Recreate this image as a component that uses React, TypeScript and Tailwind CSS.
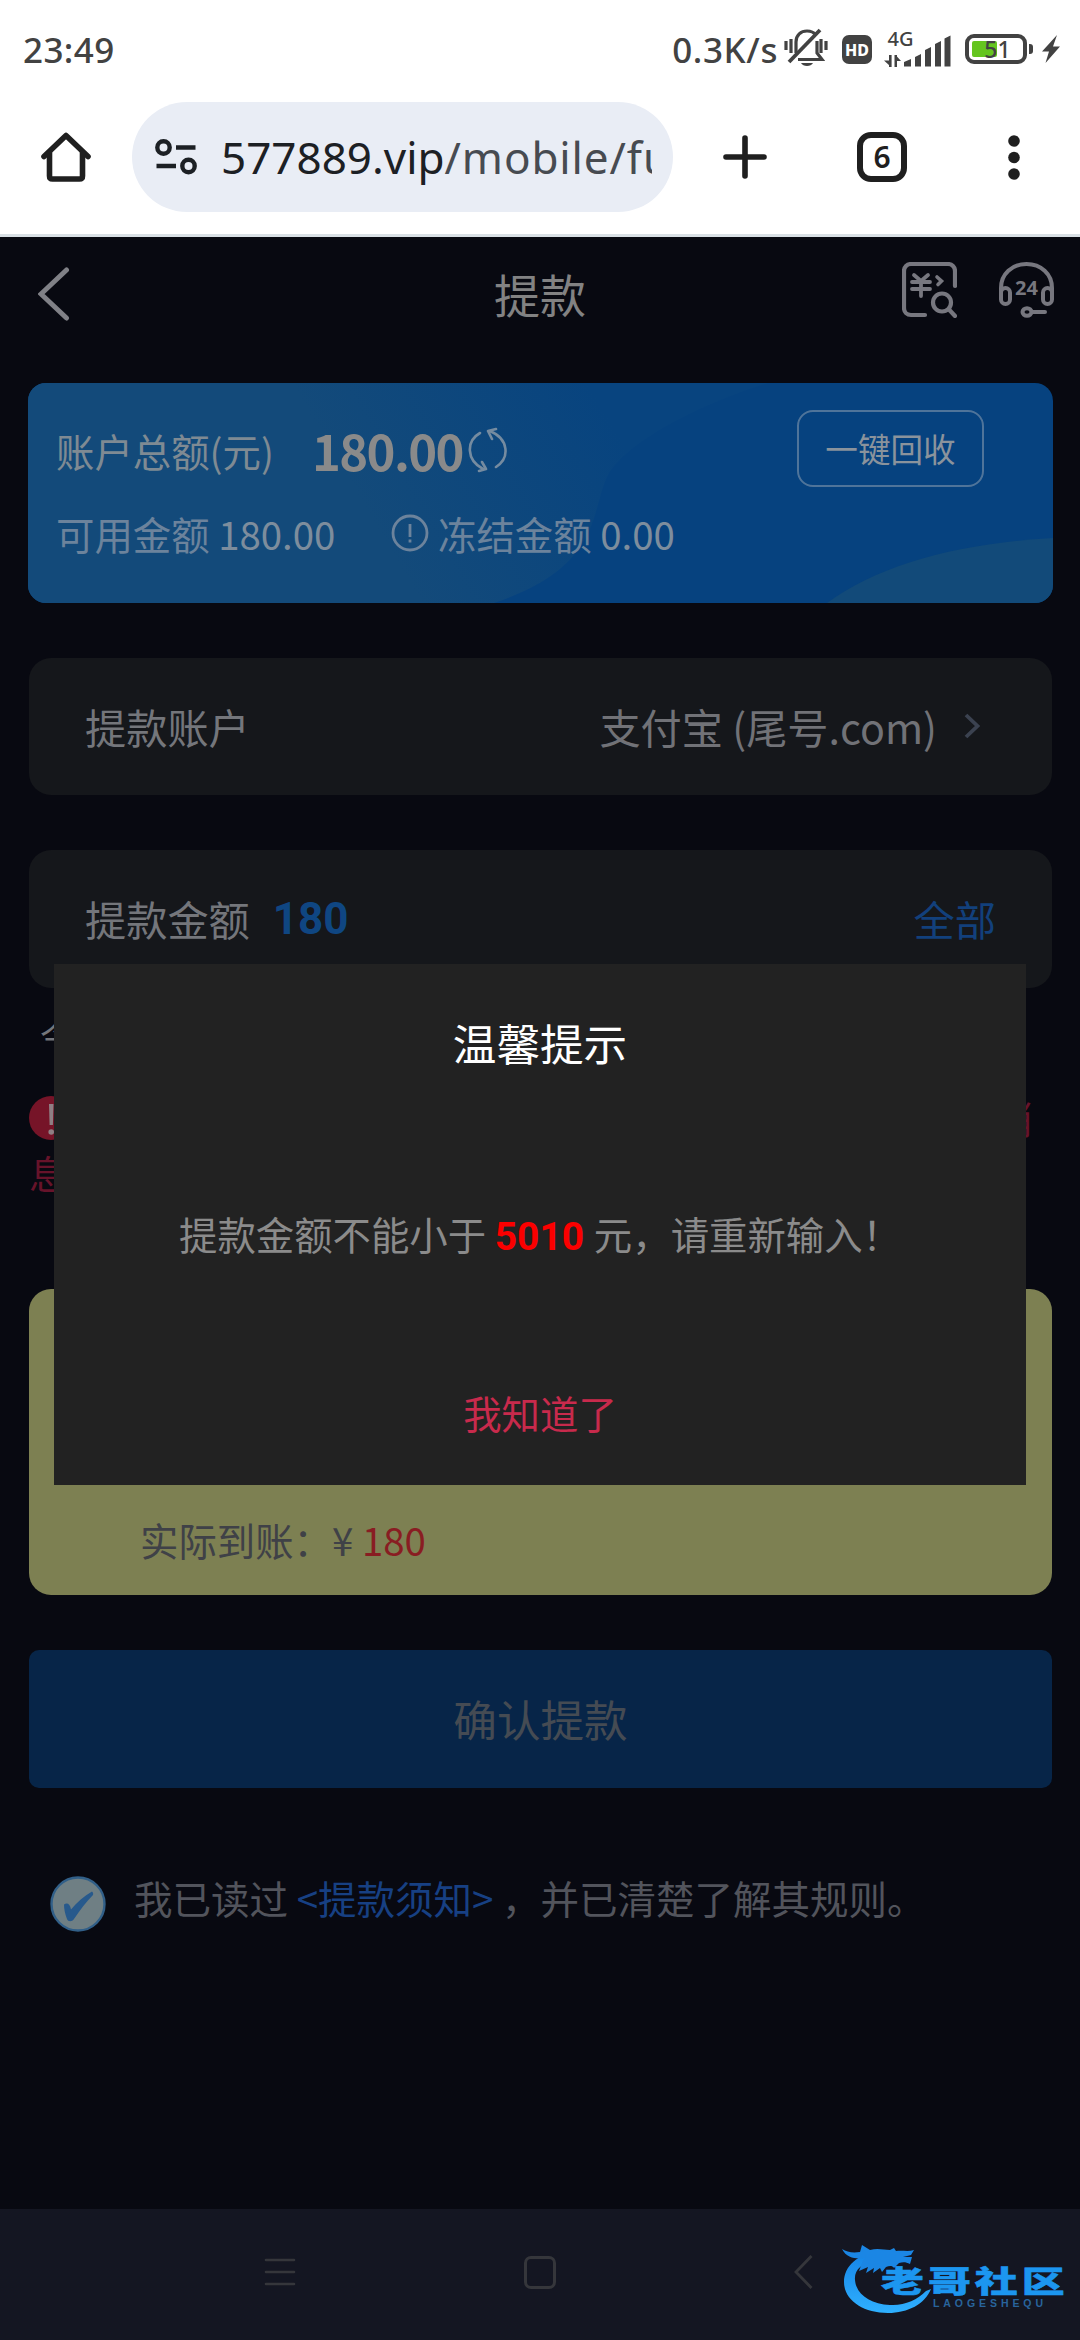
import { useState } from "react";

const MIN_AMOUNT = 5010;

function StatusBar() {
  return (
    <div className="h-[96px] pl-[23px] pr-[20px] flex items-center justify-between text-[#424242] font-medium font-['Noto_Sans','Noto_Sans_CJK_SC',sans-serif]">
      <span className="text-[35px] leading-[48px] tracking-[0.4px] pt-[3px]">23:49</span>
      <div className="flex items-center">
        <span className="text-[35px] leading-[48px] tracking-[0.6px] pt-[3px]">0.3K/s</span>
        <svg className="ml-[6px] mr-[1px] w-[44px] h-[40px]" viewBox="0 0 44 40" fill="none" stroke="currentColor" strokeWidth="3.2">
          <path d="M2 13v9M7 11v14M37 11v14M42 13v9" />
          <path d="M12 25V14c0-7 5-11 11-11 4 0 7 1.500 9 4M33 13v12l5 6.500H14" />
          <path d="M5 34L36 2" strokeWidth="3.8" />
          <path d="M17 35h12c-2 4-10 4-12 0z" fill="currentColor" stroke="none" />
        </svg>
        <div className="ml-[13px] mt-[3px] w-[30px] h-[29px] rounded-[7px] bg-[#424242] text-white text-[16px] font-extrabold leading-none flex items-center justify-center">
          HD
        </div>
        <svg className="ml-[12px] mt-[1px] w-[68px] h-[36px] overflow-visible" viewBox="0 0 68 36" fill="currentColor">
          <text x="3.500" y="14.500" fontSize="20" fontWeight="500">4G</text>
          <path d="M5 24h2.600v12H5zM5.500 34.500L0 29.500h5.500zM10.500 24H13v12h-2.500zM12.500 25L17 30h-4.500z" />
          <path d="M20 31l7-3v7.500h-7zM31 26l6-3v12.500h-6zM41 19l6-3v19.500h-6zM51 13l6-3v25.500h-6zM60.500 7.500l6-3v31h-6z" />
        </svg>
        <div className="ml-[13px] mt-[2px] w-[62px] h-[30px] rounded-[9px] border-4 border-[#424242] p-[3px] flex relative">
          <div className="w-[25px] h-full rounded-[2px] bg-[#65c51f]" />
          <span className="absolute inset-0 pl-[3px] flex items-center justify-center text-[23px] leading-none">51</span>
        </div>
        <div className="ml-[2px] mt-[2px] w-[4px] h-[10px] rounded-r-[3px] bg-[#424242]" />
        <svg className="ml-[9px] mt-[2px] w-[18px] h-[28px]" viewBox="0 0 18 28" fill="currentColor">
          <path d="M15 0L0 16.500h7L3.500 28 18 11.500h-7z" />
        </svg>
      </div>
    </div>
  );
}

function BrowserBar() {
  return (
    <div className="h-[141px] pt-[6px] pl-[41px] flex items-start border-b-[3px] border-[#d9e0e5] text-[#1f1f1f] font-['Noto_Sans','Noto_Sans_CJK_SC',sans-serif]">
      <svg className="mt-[30px] w-[50px] h-[50px]" viewBox="0 0 50 50" fill="none" stroke="currentColor" strokeWidth="5.600" strokeLinejoin="round" strokeLinecap="round">
        <path d="M3 24.500L25 3.500l22 21" />
        <path d="M8.500 21v23c0 2 1 3 3 3h27c2 0 3-1 3-3V21" />
      </svg>
      <div className="ml-[41px] w-[541px] h-[110px] rounded-full bg-[#e9edf5] pl-[23px] flex items-center">
        <svg className="w-[42px] h-[36px]" viewBox="0 0 42 36" fill="none" stroke="#1c2024" strokeWidth="4.400">
          <circle cx="8.500" cy="8.500" r="6.200" />
          <circle cx="33.500" cy="27" r="6.200" />
          <path d="M21 8.500h19.500M1.500 27H21" />
        </svg>
        <div className="ml-[24px] w-[431px] overflow-hidden whitespace-nowrap text-[44px] leading-[60px] text-[#1c2024]">
          577889.vip<span className="text-[#474b51] tracking-[0.900px]">/mobile/fu</span>
        </div>
      </div>
      <svg className="ml-[50px] mt-[33px] w-[44px] h-[44px]" viewBox="0 0 44 44" stroke="currentColor" strokeWidth="5.600" strokeLinecap="round">
        <path d="M22 3v38M3 22h38" />
      </svg>
      <div className="ml-[90px] mt-[30px] w-[50px] h-[50px] rounded-[14px] border-[6px] border-[#1f1f1f] flex items-center justify-center text-[30px] font-semibold leading-none">
        6
      </div>
      <svg className="ml-[101px] mt-[33px] w-[12px] h-[45px]" viewBox="0 0 12 45" fill="currentColor">
        <circle cx="6" cy="6" r="5.800" />
        <circle cx="6" cy="22.500" r="5.800" />
        <circle cx="6" cy="39" r="5.800" />
      </svg>
    </div>
  );
}

function PageHeader() {
  return (
    <header className="h-[146px] pt-[25px] pl-[38px] pr-[26px] grid grid-cols-3 items-start text-[#77777f]">
      <svg className="mt-[5px] w-[32px] h-[54px]" viewBox="0 0 32 54" fill="none" stroke="#808187" strokeWidth="5" strokeLinecap="round">
        <path d="M28.500 3L3 27l25.500 24" />
      </svg>
      <h1 className="-mt-[2px] pl-[4px] pr-[16px] text-center text-[46px] leading-[66px] text-[#828283]">提款</h1>
      <div className="flex justify-end gap-[42px]">
        <svg className="w-[55px] h-[56px]" viewBox="0 0 55 56" fill="none" stroke="currentColor" strokeWidth="4.200" strokeLinecap="round">
          <path d="M53 24V9c0-4-3-7-7-7H9C5 2 2 5 2 9v37c0 4 3 7 7 7h14" />
          <path d="M12 13l7 6 7-6M10 20h18M10 27h18M19 19v15" strokeWidth="3.800" />
          <path d="M35 15l4.500 4L36 22.500" strokeWidth="3.600" />
          <circle cx="40" cy="40.500" r="9" />
          <path d="M47 47.500l6 6.500" />
        </svg>
        <svg className="w-[55px] h-[56px]" viewBox="0 0 55 56" fill="none" stroke="currentColor" strokeWidth="4" strokeLinecap="round">
          <path d="M2 32V26C2 12 13 2 27.500 2S53 12 53 26v6" />
          <rect x="2" y="26" width="9" height="16" rx="4.500" />
          <rect x="44" y="26" width="9" height="16" rx="4.500" />
          <ellipse cx="28" cy="50" rx="4.500" ry="3.800" />
          <path d="M33 50h13" />
          <text x="16" y="33" fontSize="20" fontWeight="700" fill="currentColor" stroke="none" textLength="23" fontFamily="Noto Sans">24</text>
        </svg>
      </div>
    </header>
  );
}

function BalanceCard({ total, frozen }: { total: string; frozen: string }) {
  return (
    <section className="relative ml-[28px] w-[1025px] h-[220px] rounded-[18px] overflow-hidden bg-[#06427f] text-[#7f8a93]">
      <svg className="absolute inset-0 w-full h-full" viewBox="0 0 1025 220">
        <defs>
          <linearGradient id="wave" gradientUnits="userSpaceOnUse" x1="340" y1="130" x2="560" y2="0">
            <stop offset="0" stopColor="#134a7a" />
            <stop offset="1" stopColor="#08447f" />
          </linearGradient>
        </defs>
        <path d="M0 0H740C670 22 600 58 580 92C562 128 575 184 466 220H0z" fill="url(#wave)" />
        <path d="M799 220C850 182 930 160 1025 155V220z" fill="#124a79" />
      </svg>
      <div className="relative pl-[28px] pt-[27px]">
        <div className="flex items-start h-[77px]">
          <span className="pt-[12px] w-[254px] text-[38.4px] leading-[56px]">账户总额(元)</span>
          <span className="pt-[9px] pl-[2px] w-[158px] text-[49px] leading-[62px] font-bold tracking-[-1.600px] text-[#8a8a8a]">{total}</span>
          <svg className="mt-[17px] w-[40px] h-[46px] text-[#758ba0]" viewBox="0 0 40 46" fill="none" stroke="currentColor" strokeWidth="2.600" strokeLinecap="round" strokeLinejoin="round">
            <path d="M12 6C-2 14-2 33 15 42M11 44l7-2-4-7" />
            <path d="M28 40C42 31 41 12 22 4M28 2l-8 2 4 8" />
          </svg>
          <button className="ml-[289px] w-[187px] h-[77px] rounded-[16px] border-2 border-[#4f749a] text-[32.600px] leading-none text-[#8a939c]">
            一键回收
          </button>
        </div>
        <div className="mt-[18px] flex items-center text-[38.400px] leading-[56px] text-[#6c839c]">
          <span className="w-[335px]">
            可用金额 <span className="text-[#7d8d9d]">{total}</span>
          </span>
          <svg className="w-[38px] h-[38px]" viewBox="0 0 38 38" fill="none" stroke="currentColor" strokeWidth="2.800">
            <circle cx="19" cy="19" r="17" />
            <path d="M19 10v13M19 25.500v3" />
          </svg>
          <span className="ml-[9px]">
            冻结金额 <span className="text-[#7d8d9d]">{frozen}</span>
          </span>
        </div>
      </div>
    </section>
  );
}

function NoticeDialog({ onClose }: { onClose: () => void }) {
  return (
    <div className="absolute left-[54px] top-[964px] w-[972px] h-[521px] bg-[#222222] text-center">
      <h2 className="pt-[46px] text-[43.600px] leading-[64px] text-white">温馨提示</h2>
      <p className="mt-[131px] pl-[125px] text-left text-[38.400px] leading-[56px] text-[#8b8b8b] whitespace-nowrap">
        提款金额不能小于 <b className="mr-[1px] text-[39px] leading-none font-['Roboto',sans-serif] text-[#fb0000]">{MIN_AMOUNT}</b> 元，请重新输入！
      </p>
      <button className="mt-[123px] text-[38.400px] leading-[56px] text-[#c82a4c]" onClick={onClose}>
        我知道了
      </button>
    </div>
  );
}

function SystemNav() {
  return (
    <nav className="h-[131px] relative bg-[#141622] pl-[264px] pt-[46px] flex items-start text-[#35363b]">
      <svg className="w-[32px] h-[34px]" viewBox="0 0 32 34" stroke="currentColor" strokeWidth="2.600" strokeLinecap="round">
        <path d="M2 5h28M2 17h28M2 29h28" />
      </svg>
      <div className="ml-[228px] mt-[1px] w-[32px] h-[33px] rounded-[7px] border-[3px] border-[#35363b]" />
      <svg className="ml-[237px] w-[20px] h-[34px]" viewBox="0 0 20 34" fill="none" stroke="currentColor" strokeWidth="2.800">
        <path d="M18.500 1L3 17l15.500 16" />
      </svg>
      <svg className="absolute left-[840px] top-[28px] w-[226px] h-[80px] overflow-visible" viewBox="0 0 226 80">
        <defs>
          <linearGradient id="logo" x1="0" y1="0" x2="0" y2="1">
            <stop offset="0" stopColor="#1583e6" />
            <stop offset="1" stopColor="#2fb0ff" />
          </linearGradient>
        </defs>
        <path d="M38 14C18 17 4 29 4 45c0 18 19 31 44 31 20 0 37-9 43-24l-5 2C77 63 64 69 50 68 30 67 16 57 15 43 14 33 22 26 34 24z" fill="url(#logo)" />
        <path
          d="M2 12c5 3 10 4 18 3l2-7 8 5c8-2 14 0 20 0l4-2 2 3c6-1 12 1 18-1l-3 5-8 2h9l-2 7c-4-2-7-2-11-1l-5 5c-2-3-5-2-8-1l-4 5-2-4-7 5 1-5-8 5 2-6-9 4c2-5 3-10 6-13-8 1-18 1-23-9z"
          fill="#1b86e4"
        />
        <text transform="translate(41 55) scale(1.430 1)" fontSize="30" fontWeight="900" letterSpacing="2.800" fill="#1c96f0" stroke="#1c96f0" strokeWidth="0.500" fontFamily="Noto Sans CJK SC">老哥社区</text>
        <text x="93" y="69.500" fontSize="10.500" textLength="110" fill="#28649c" fontWeight="700" fontFamily="Liberation Sans">LAOGESHEQU</text>
      </svg>
    </nav>
  );
}

export default function App() {
  const [open, setOpen] = useState(true);

  return (
    <div className="relative w-[1080px] h-[2340px] overflow-hidden flex flex-col bg-[#080911] font-['Noto_Sans_CJK_SC',sans-serif]" lang="zh-CN">
      <div className="bg-white">
        <StatusBar />
        <BrowserBar />
      </div>

      <PageHeader />
      <BalanceCard total="180.00" frozen="0.00" />

      <main className="flex-1 pl-[29px] pr-[28px] text-[#74767b]">
        <div className="mt-[55px] h-[137px] rounded-[22px] bg-[#15171b] pl-[56px] pr-[71px] pb-[1px] flex items-center text-[41.200px] leading-[60px]">
          <span>提款账户</span>
          <span className="ml-auto text-[#717277]">支付宝 (尾号.com)</span>
          <svg className="ml-[26px] w-[18px] h-[28px]" viewBox="0 0 18 28" fill="none" stroke="#3b4250" strokeWidth="3.800">
            <path d="M3 3l11.500 11L3 25" />
          </svg>
        </div>

        <div className="mt-[55px] h-[138px] rounded-[22px] bg-[#15171b] pl-[56px] pr-[56px] pb-[3px] flex items-center text-[41.200px] leading-[60px]">
          <span>提款金额</span>
          <b className="ml-[23px] mt-[2px] text-[44px] text-[#0f4682] font-['Roboto',sans-serif]">180</b>
          <span className="ml-auto text-[#12407c]">全部</span>
        </div>

        <p className="mt-[23px] pl-[11px] text-[34px] leading-[50px]">今</p>

        <div className="mt-[34px] flex items-start justify-between text-[38.400px] leading-[56px] text-[#67132a]">
          <svg className="mt-[1px] w-[44px] h-[44px]" viewBox="0 0 44 44">
            <circle cx="22" cy="22" r="22" fill="#761428" />
            <path d="M20 8h4.500l-.6 21h-3.300z" fill="#8f7f84" />
            <circle cx="22.200" cy="36" r="2.800" fill="#8f7f84" />
          </svg>
          <span className="-mt-[6px] mr-[19px]">消</span>
        </div>
        <p className="-mt-[1px] text-[38.400px] leading-[56px] text-[#67132a]">息</p>

        <div className="mt-[89px] h-[306px] rounded-[22px] bg-[#7d8052] pl-[111px] pb-[28px] flex items-end text-[38.400px] leading-[56px] text-[#3f4147] whitespace-pre">
          实际到账：¥ <span className="text-[#891d22]">180</span>
        </div>

        <button className="mt-[55px] w-full h-[138px] rounded-[10px] bg-[#072548] pb-[2px] text-[43.600px] leading-[64px] text-[#454b53]">
          确认提款
        </button>

        <div className="mt-[81px] pl-[21px] flex items-start text-[38.500px] leading-[56px] text-[#52545c]">
          <svg className="mt-[7px] w-[56px] h-[56px]" viewBox="0 0 56 56">
            <circle cx="28" cy="28" r="26.500" fill="#6f7f84" stroke="#315f88" strokeWidth="2.400" />
            <path d="M14 28.500c3-2 6-1 7 5C27 26 34 20 42 15.500c1 1 1.500 2 1 3.500C36 26 30 34 24 43c-2 3-6 3-7 0-2-5-3-10-3-14.500z" fill="#27598c" />
          </svg>
          <span className="ml-[28px]">
            我已读过 <a className="text-[#174083]">&lt;提款须知&gt;</a> ，并已清楚了解其规则。
          </span>
        </div>
      </main>

      <SystemNav />
      {open && <NoticeDialog onClose={() => setOpen(false)} />}
    </div>
  );
}
